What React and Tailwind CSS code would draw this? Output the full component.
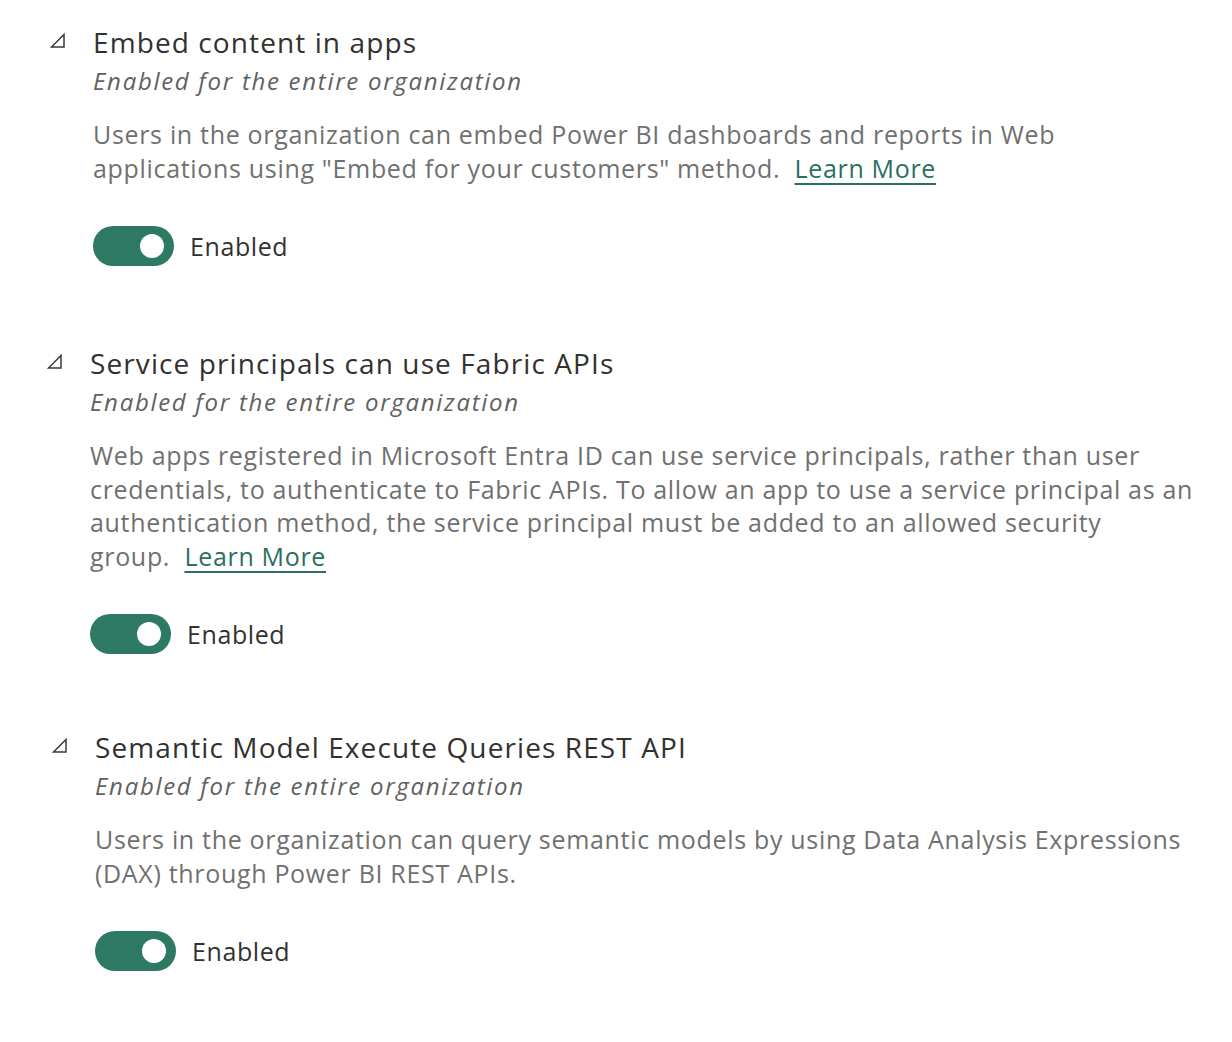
import React from "react";

function Caret() {
  return (
    <svg width="16" height="16" viewBox="0 0 16 16" className="block">
      <path d="M14 1.5 L14 14 L1.5 14 Z" fill="none" stroke="#3b3a39" strokeWidth="1.5" strokeLinejoin="miter" />
    </svg>
  );
}

function Toggle() {
  return (
    <div className="flex items-center gap-[16px]">
      <div className="relative w-[81px] h-[40px] rounded-full bg-[#2d7964]">
        <div className="absolute right-[10px] top-[8px] w-[24px] h-[24px] rounded-full bg-white" />
      </div>
      <span className="text-[25px] leading-[32px] tracking-[0.6px] text-[#323130]">Enabled</span>
    </div>
  );
}

function Link() {
  return <span className="text-[#2a6f60] underline underline-offset-[5px] decoration-[1.5px]">Learn More</span>;
}

function Section({ pad, top, title, lines }) {
  return (
    <div className={`flex ${pad} ${top}`}>
      <div className="w-[16px] shrink-0 pt-[9px]">
        <Caret />
      </div>
      <div className="ml-[27px] flex flex-col">
        <div className="text-[28px] leading-[36px] tracking-[1.1px] text-[#323130]">{title}</div>
        <div className="mt-[5px] text-[24px] leading-[32px] italic tracking-[1.7px] text-[#616161]">Enabled for the entire organization</div>
        <div className="mt-[21px] text-[25px] leading-[33.5px] tracking-[0.68px] text-[#707070]">
          {lines.map((l, i) => (
            <div key={i} className="whitespace-nowrap">{l}</div>
          ))}
        </div>
        <div className="mt-[41px]">
          <Toggle />
        </div>
      </div>
    </div>
  );
}

export default function App() {
  return (
    <div className="w-[1232px] h-[1042px] bg-white overflow-hidden pt-[24px]" style={{ fontFamily: '"Open Sans", "Noto Sans", sans-serif' }}>
      <Section
        pad="pl-[50px]"
        top=""
        title="Embed content in apps"
        lines={[
          "Users in the organization can embed Power BI dashboards and reports in Web",
          <>applications using "Embed for your customers" method.&nbsp; <Link /></>,
        ]}
      />
      <Section
        pad="pl-[47px]"
        top="mt-[79px]"
        title="Service principals can use Fabric APIs"
        lines={[
          "Web apps registered in Microsoft Entra ID can use service principals, rather than user",
          "credentials, to authenticate to Fabric APIs. To allow an app to use a service principal as an",
          "authentication method, the service principal must be added to an allowed security",
          <>group.&nbsp; <Link /></>,
        ]}
      />
      <Section
        pad="pl-[52px]"
        top="mt-[75px]"
        title="Semantic Model Execute Queries REST API"
        lines={[
          "Users in the organization can query semantic models by using Data Analysis Expressions",
          "(DAX) through Power BI REST APIs.",
        ]}
      />
    </div>
  );
}
